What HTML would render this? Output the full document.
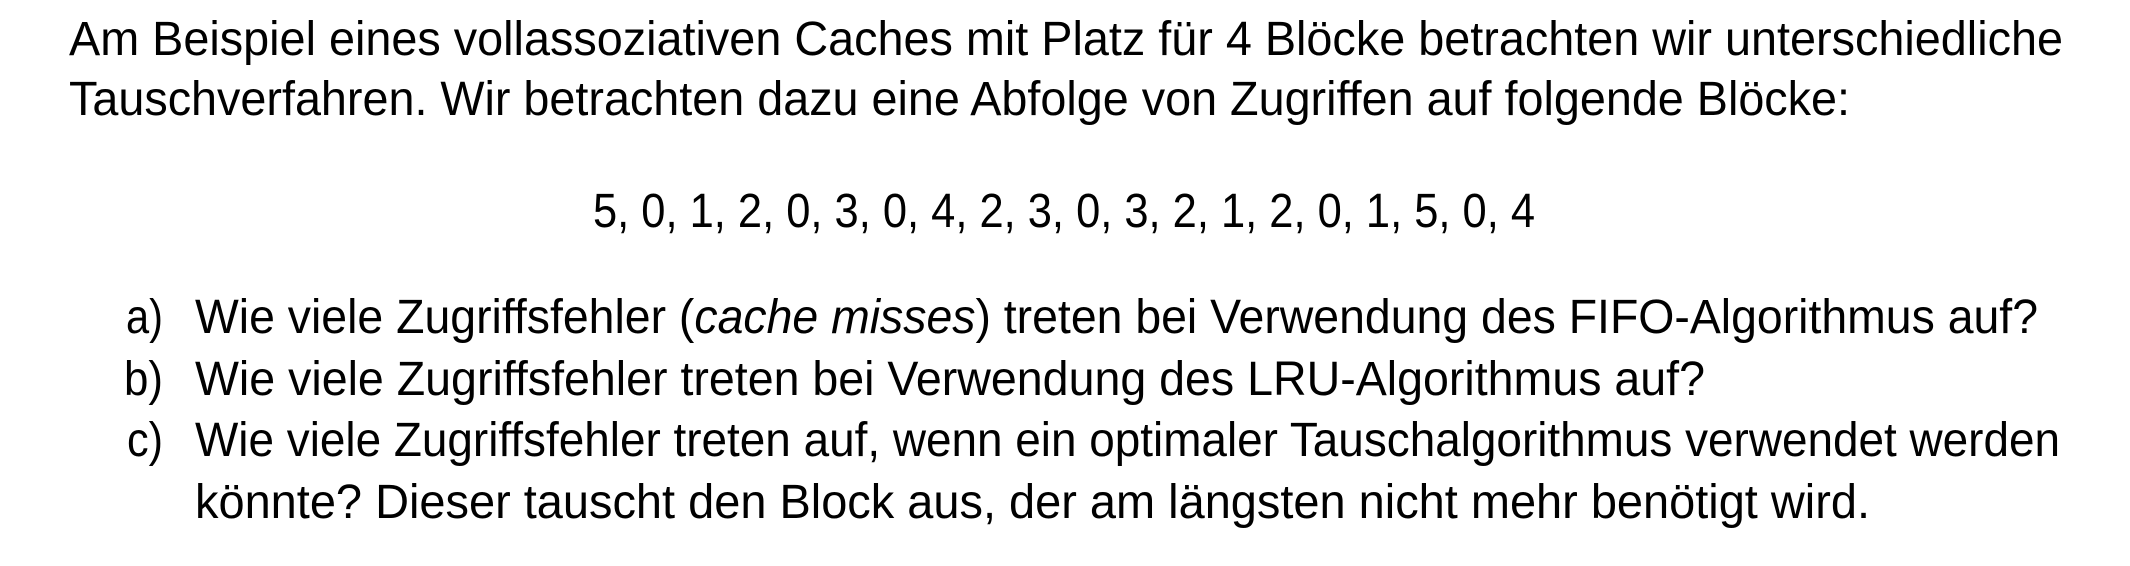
<!DOCTYPE html>
<html><head><meta charset="utf-8"><style>
html,body{margin:0;padding:0;background:#fff;}
body{width:2130px;height:566px;position:relative;overflow:hidden;font-family:"Liberation Sans",sans-serif;font-size:48px;color:#000;}
.l{position:absolute;height:48px;line-height:48px;white-space:nowrap;transform-origin:0 0;}
</style></head><body>
<div class="l" data-x="69" data-b="57" data-e="2063">Am Beispiel eines vollassoziativen Caches mit Platz für 4 Blöcke betrachten wir unterschiedliche</div>
<div class="l" data-x="69" data-b="117" data-e="1850">Tauschverfahren. Wir betrachten dazu eine Abfolge von Zugriffen auf folgende Blöcke:</div>
<div class="l" data-x="593" data-b="229" data-e="1535">5, 0, 1, 2, 0, 3, 0, 4, 2, 3, 0, 3, 2, 1, 2, 0, 1, 5, 0, 4</div>
<div class="l" data-x="126" data-b="335" data-e="163">a)</div>
<div class="l" data-x="195" data-b="335" data-e="2038">Wie viele Zugriffsfehler (<i>cache misses</i>) treten bei Verwendung des FIFO-Algorithmus auf?</div>
<div class="l" data-x="124" data-b="397" data-e="163">b)</div>
<div class="l" data-x="195" data-b="397" data-e="1705">Wie viele Zugriffsfehler treten bei Verwendung des LRU-Algorithmus auf?</div>
<div class="l" data-x="127" data-b="458" data-e="163">c)</div>
<div class="l" data-x="195" data-b="458" data-e="2060">Wie viele Zugriffsfehler treten auf, wenn ein optimaler Tauschalgorithmus verwendet werden</div>
<div class="l" data-x="195" data-b="520" data-e="1870">könnte? Dieser tauscht den Block aus, der am längsten nicht mehr benötigt wird.</div>
<script>
document.querySelectorAll('.l').forEach(function(el){
  var x=+el.dataset.x,b=+el.dataset.b,e=+el.dataset.e;
  el.style.left=x+'px';
  el.style.top=(b-41)+'px';
  var w=el.getBoundingClientRect().width;
  el.style.transform='scaleX('+((e-x)/w)+')';
});
</script>
</body></html>
